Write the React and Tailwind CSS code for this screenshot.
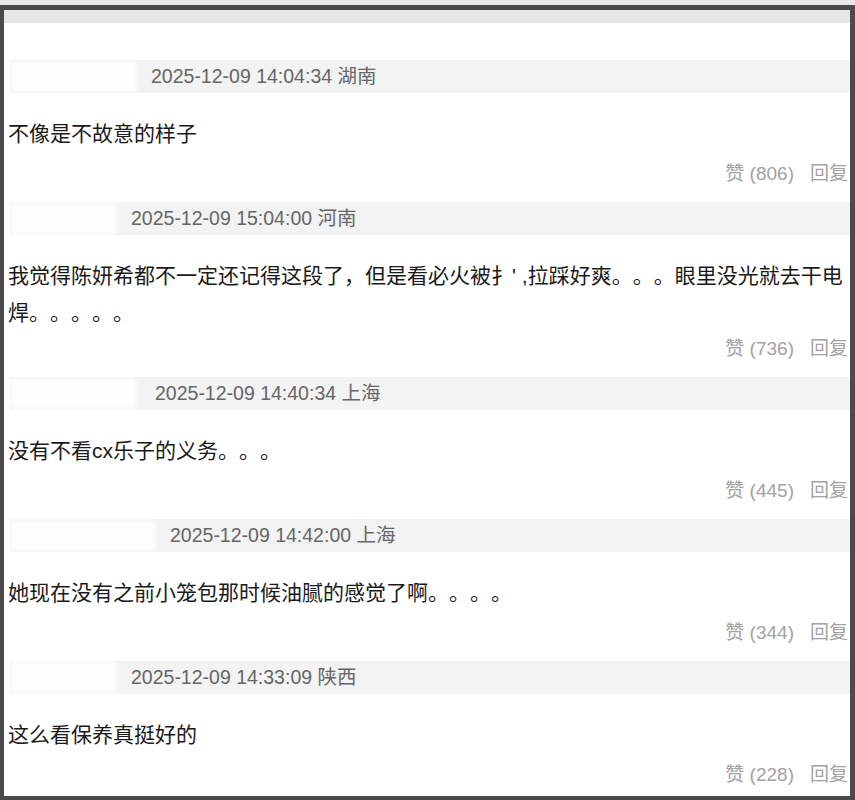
import React from "react";

const items = [
  { box: 123, date: "2025-12-09 14:04:34 湖南", text: "不像是不故意的样子", likes: 806 },
  {
    box: 103,
    date: "2025-12-09 15:04:00 河南",
    text: "我觉得陈妍希都不一定还记得这段了，但是看必火被扌' ,拉踩好爽。。。眼里没光就去干电\n焊。。。。。",
    likes: 736,
    two: true,
  },
  { box: 123, date: "2025-12-09 14:40:34 上海", text: "没有不看cx乐子的义务。。。", likes: 445, gap: 20 },
  { box: 142, date: "2025-12-09 14:42:00 上海", text: "她现在没有之前小笼包那时候油腻的感觉了啊。。。。", likes: 344 },
  { box: 103, date: "2025-12-09 14:33:09 陕西", text: "这么看保养真挺好的", likes: 228 },
];

function Comment({ item }) {
  return (
    <div className="flex flex-col">
      <div className="ml-[6px] h-[33px] flex items-center bg-[#f3f3f3]">
        <div className="ml-[2px] h-[27px] bg-[#fdfdfd] rounded-[3px] shadow-[0_0_4px_2px_#fdfdfd]" style={{ width: item.box }} />
        <span className={`${item.gap ? "ml-[20px]" : "ml-[16px]"} text-[19.5px] text-[#666666] whitespace-nowrap`}>
          {item.date}
        </span>
      </div>
      <div className="mt-[22px] pl-[4px] text-[21px] leading-[37px] text-[#1a1a1a] whitespace-pre-line">
        {item.text}
      </div>
      <div className={`${item.two ? "mt-[4px]" : "mt-[8px]"} h-[28px] flex justify-end items-center gap-[16px] pr-[2px] text-[19px] text-[#a2a2a2]`}>
        <span>赞 ({item.likes})</span>
        <span>回复</span>
      </div>
    </div>
  );
}

export default function App() {
  return (
    <div className="w-[855px] h-[800px] bg-[#e8e8e8] pt-[5px] overflow-hidden [text-spacing-trim:space-all] font-['Liberation_Sans','Noto_Sans_CJK_SC',sans-serif]">
      <div className="h-[795px] border-t-[5px] border-l-4 border-r-[5px] border-b-4 border-[#4a4a4a] bg-white flex flex-col overflow-hidden">
        <div className="h-[13px] shrink-0 bg-[#e6e6e6]" />
        <div className="pt-[37px] flex flex-col gap-[14px]">
          {items.map((it, i) => (
            <Comment key={i} item={it} />
          ))}
        </div>
      </div>
    </div>
  );
}
